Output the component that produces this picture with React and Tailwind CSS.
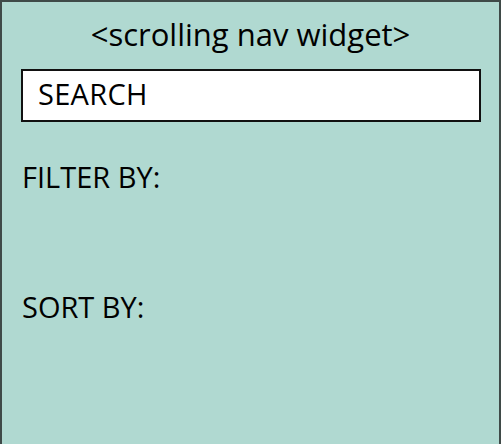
import React from "react";

export default function App() {
  return (
    <div
      className="w-[501px] h-[444px] bg-[#b0d9d1] border-2 border-b-0 border-[#3f4a48] text-black overflow-hidden"
      style={{ fontFamily: '"Open Sans", "Noto Sans", sans-serif' }}
    >
      {/* header */}
      <h1 className="pt-[14px] text-center text-[31px] leading-[37px]">
        &lt;scrolling nav widget&gt;
      </h1>

      {/* search */}
      <div className="ml-[19px] mt-[16px] w-[460px] h-[53px] bg-white border-2 border-[#111] pl-[15px] pt-[8px]">
        <span className="block text-[29px] leading-none tracking-[0.3px]">SEARCH</span>
      </div>

      <div className="pl-[20px] mt-[38px] text-[29px] leading-[34px]">FILTER BY:</div>
      <div className="pl-[20px] mt-[96px] text-[29px] leading-[34px]">SORT BY:</div>
    </div>
  );
}
